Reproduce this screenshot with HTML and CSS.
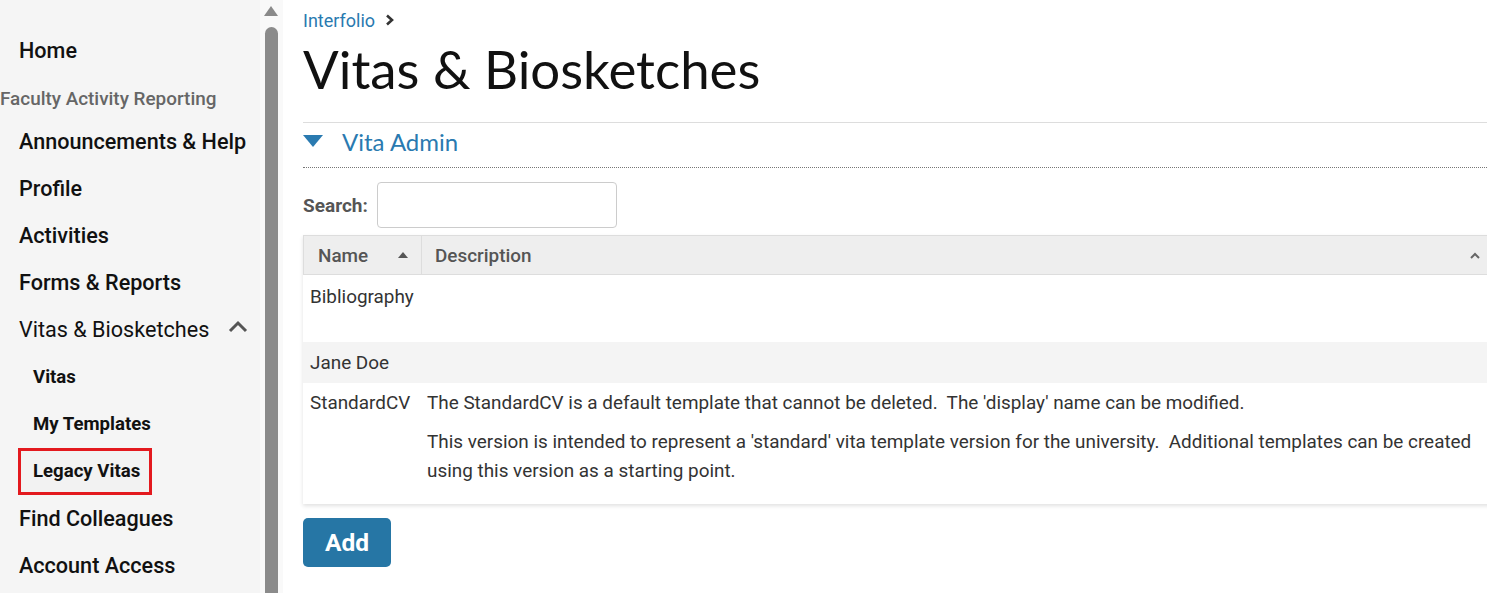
FILE: index.html
```html
<!DOCTYPE html>
<html lang="en">
<head>
<meta charset="utf-8">
<title>Vitas &amp; Biosketches</title>
<link rel="stylesheet" href="styles.css">
</head>
<body>
<div class="app">
  <nav class="sidebar">
    <a class="nav-item first">Home</a>
    <div class="nav-group">Faculty Activity Reporting</div>
    <a class="nav-item">Announcements &amp; Help</a>
    <a class="nav-item">Profile</a>
    <a class="nav-item">Activities</a>
    <a class="nav-item">Forms &amp; Reports</a>
    <a class="nav-item open">Vitas &amp; Biosketches
      <svg class="chev" width="20" height="13" viewBox="0 0 20 13"><path d="M2 11 L10 3 L18 11" fill="none" stroke="#555" stroke-width="3"/></svg>
    </a>
    <a class="nav-sub">Vitas</a>
    <a class="nav-sub">My Templates</a>
    <a class="nav-sub highlighted"><span class="redbox">Legacy Vitas</span></a>
    <a class="nav-item">Find Colleagues</a>
    <a class="nav-item">Account Access</a>
  </nav>
  <div class="scrolltrack">
    <svg class="scroll-arrow" width="14" height="10" viewBox="0 0 14 10"><path d="M0 10 L7 0 L14 10 Z" fill="#8a8a8a"/></svg>
    <div class="scroll-thumb"></div>
  </div>
  <main class="main">
    <div class="breadcrumb"><a>Interfolio</a>
      <svg width="10" height="12" viewBox="0 0 10 12"><path d="M2 1.5 L7 6 L2 10.5" fill="none" stroke="#333" stroke-width="2.6"/></svg>
    </div>
    <h1 class="title">Vitas &amp; Biosketches</h1>
    <section class="panel">
      <div class="panel-head">
        <svg class="tri" width="20" height="12" viewBox="0 0 20 12"><path d="M0 0 H20 L10 12 Z" fill="#2a7ab0"/></svg>
        <span class="panel-title">Vita Admin</span>
      </div>
      <div class="search">
        <label for="q">Search:</label>
        <input id="q" type="text">
      </div>
      <div class="table">
        <div class="thead">
          <div class="th name">Name
            <svg class="sort" width="10" height="6" viewBox="0 0 10 6"><path d="M0 6 L5 0 L10 6 Z" fill="#555"/></svg>
          </div>
          <div class="th desc">Description
            <svg class="caret" width="12" height="8" viewBox="0 0 12 8"><path d="M2 7 L6 3 L10 7" fill="none" stroke="#666" stroke-width="2"/></svg>
          </div>
        </div>
        <div class="tr tall">
          <div class="td name">Bibliography</div>
          <div class="td desc"></div>
        </div>
        <div class="tr alt">
          <div class="td name">Jane Doe</div>
          <div class="td desc"></div>
        </div>
        <div class="tr">
          <div class="td name">StandardCV</div>
          <div class="td desc">
            <p>The StandardCV is a default template that cannot be deleted.&nbsp; The 'display' name can be modified.</p>
            <p>This version is intended to represent a 'standard' vita template version for the university.&nbsp; Additional templates can be created using this version as a starting point.</p>
          </div>
        </div>
      </div>
      <button class="btn-add">Add</button>
    </section>
  </main>
</div>
</body>
</html>
```
FILE: styles.css
```css
* { box-sizing: border-box; }
html, body { margin: 0; padding: 0; }
body {
  font-family: Roboto, "Liberation Sans", Arial, sans-serif;
  color: #222;
  background: #fff;
  overflow: hidden;
  height: 593px;
}
.app {
  display: flex;
  height: 593px;
}
.sidebar {
  width: 260px;
  flex: 0 0 260px;
  background: #f5f5f5;
  display: flex;
  flex-direction: column;
  padding-top: 35px;
}
.nav-item {
  display: flex;
  align-items: center;
  height: 47.2px;
  flex: 0 0 auto;
  padding-left: 19px;
  font-size: 21.6px;
  font-weight: 500;
  color: #111;
  white-space: nowrap;
}
.nav-item.first { height: 30px; }
.nav-group {
  height: 30px;
  display: flex;
  align-items: center;
  font-size: 18.9px;
  font-weight: 500;
  color: #666;
  white-space: nowrap;
  margin-top: 18px;
  margin-bottom: 4.5px;
}
.nav-item.open { font-weight: 400; }
.chev { margin-left: 19px; margin-top: -6px; }
.nav-sub {
  display: flex;
  align-items: center;
  height: 47.2px;
  flex: 0 0 auto;
  padding-left: 33px;
  font-size: 18.6px;
  font-weight: 700;
  color: #111;
}
.nav-sub.highlighted { padding-left: 18px; }
.redbox {
  display: inline-flex;
  align-items: center;
  height: 47px;
  padding: 0 9px 0 12px;
  border: 3px solid #e3191e;
  background: #f2f2f2;
}
.scrolltrack {
  width: 23px;
  flex: 0 0 23px;
  background: #f9f9f9;
  position: relative;
}
.scroll-arrow { position: absolute; left: 4px; top: 6px; }
.scroll-thumb {
  position: absolute;
  left: 5px;
  top: 27px;
  width: 13px;
  height: 600px;
  background: #8b8b8b;
  border-radius: 7px 7px 0 0;
}
.main {
  flex: 1;
  padding: 8px 0 0 20px;
  min-width: 0;
}
.breadcrumb {
  display: flex;
  align-items: center;
  gap: 10px;
  height: 24px;
  font-size: 18px;
}
.breadcrumb a { color: #2a7ab0; }
.title {
  margin: 7px 0 0 0;
  font-family: Lato, "Open Sans", sans-serif;
  font-weight: 400;
  font-size: 52.8px;
  line-height: 60px;
  color: #111;
  padding-bottom: 23px;
  border-bottom: 1px solid #ddd;
}
.panel-head {
  display: flex;
  align-items: center;
  height: 45px;
  padding-bottom: 7px;
  border-bottom: 1px dotted #777;
}
.tri { margin-right: 19px; margin-top: -1px; }
.panel-title {
  font-family: Lato, "Open Sans", sans-serif;
  font-size: 24px;
  color: #2a7ab0;
}
.search {
  display: flex;
  align-items: center;
  margin-top: 14px;
  height: 46px;
}
.search label {
  font-size: 19px;
  font-weight: 700;
  color: #555;
  margin-right: 9px;
}
.search input {
  width: 240px;
  height: 46px;
  border: 1px solid #ccc;
  border-radius: 4px;
  background: #fff;
}
.table {
  margin-top: 7px;
  box-shadow: 0 2px 4px rgba(0,0,0,0.12);
  margin-right: -20px;
  font-size: 18.9px;
  color: #333;
}
.thead {
  display: flex;
  height: 40px;
  background: #eee;
  border-top: 1px solid #ddd;
  border-bottom: 1px solid #ddd;
  border-left: 1px solid #ddd;
}
.th {
  display: flex;
  align-items: center;
  font-weight: 500;
  color: #555;
}
.th.name {
  width: 118px;
  padding-left: 14px;
  border-right: 1px solid #ddd;
  justify-content: space-between;
  padding-right: 13px;
}
.th.desc {
  flex: 1;
  padding-left: 13px;
  padding-right: 26px;
  justify-content: space-between;
}
.tr { display: flex; background: #fff; }
.tr.alt { background: #f4f4f4; }
.td { padding: 9px 0 10px 7px; line-height: 22px; }
.td.name { width: 117px; flex: 0 0 117px; }
.td.desc { flex: 1; padding-right: 20px; padding-left: 7px; padding-bottom: 19px; }
.tr.tall .td { padding-top: 11px; padding-bottom: 34px; }
.tr.alt .td { padding-top: 10px; padding-bottom: 9px; }
.td.desc p { margin: 0 0 10px 0; line-height: 29px; margin-top: -4px; }
.td.desc p + p { margin-top: 0; margin-bottom: 0; }
.btn-add {
  margin-top: 14px;
  width: 88px;
  height: 49px;
  border: none;
  border-radius: 5px;
  background: #2676a5;
  color: #fff;
  font-family: Roboto, sans-serif;
  font-weight: 700;
  font-size: 24.5px;
}
```
